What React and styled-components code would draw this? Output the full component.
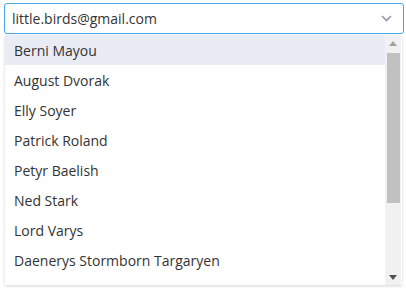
import React from "react";
import styled, { createGlobalStyle } from "styled-components";

const Global = createGlobalStyle`
  html, body { margin: 0; padding: 0; background: #fff; }
  body { font-family: "Open Sans", "Liberation Sans", sans-serif; color: #333; }
`;

const Page = styled.div`
  padding: 3px 3px 0 4px;
  width: 406px;
  height: 288px;
  box-sizing: border-box;
  overflow: hidden;
`;

const Select = styled.div`
  position: relative;
  width: 400px;
`;

const Control = styled.div`
  box-sizing: border-box;
  height: 31px;
  border: 1px solid #45a7ea;
  border-radius: 3px;
  display: flex;
  align-items: center;
  padding: 0 10px 0 7px;
  font-size: 14px;
  color: #333;
`;

const Value = styled.span`
  flex: 1;
`;

const Chevron = styled.svg`
  width: 11px;
  height: 7px;
  margin-right: 1px;
`;

const Menu = styled.div`
  position: absolute;
  top: 32px;
  left: 1px;
  width: 397px;
  height: 250px;
  display: flex;
  background: #fff;
  box-shadow: 0 1px 3px rgba(0, 0, 0, 0.18);
  z-index: 2;
`;

const List = styled.ul`
  flex: 1;
  margin: 0;
  padding: 0;
  list-style: none;
  overflow: hidden;
`;

const Item = styled.li`
  height: 30px;
  display: flex;
  align-items: center;
  padding-left: 9px;
  font-size: 14px;
  color: #333;
  background: ${(p) => (p.$active ? "#e9ecf5" : "transparent")};
`;

const ScrollBar = styled.div`
  width: 16px;
  margin-right: 1px;
  display: flex;
  flex-direction: column;
  background: #f1f1f1;
`;

const ArrowButton = styled.div`
  height: 16px;
  display: flex;
  align-items: center;
  justify-content: center;
`;

const Track = styled.div`
  flex: 1;
  padding: 2px 1px 0 2px;
`;

const Thumb = styled.div`
  height: 150px;
  background: #c1c1c1;
`;

const Behind = styled.p`
  margin: 252px 0 0 1px;
  font-size: 14px;
  line-height: 20px;
  color: #333;
`;

const names = [
  "Berni Mayou",
  "August Dvorak",
  "Elly Soyer",
  "Patrick Roland",
  "Petyr Baelish",
  "Ned Stark",
  "Lord Varys",
  "Daenerys Stormborn Targaryen",
  "Jon Snow",
  "Arya Stark",
  "Tyrion Lannister",
  "Cersei Lannister",
];

export default function App() {
  return (
    <>
      <Global />
      <Page>
        <Select>
          <Control>
            <Value>little.birds@gmail.com</Value>
            <Chevron viewBox="0 0 11 7">
              <polyline points="1,1 5.5,5.5 10,1" fill="none" stroke="#8e97ab" strokeWidth="1.6" />
            </Chevron>
          </Control>
          <Menu>
            <List>
              {names.map((n, i) => (
                <Item key={n} $active={i === 0}>{n}</Item>
              ))}
            </List>
            <ScrollBar>
              <ArrowButton>
                <svg width="8" height="5" viewBox="0 0 8 5"><polygon points="0,5 8,5 4,0" fill="#a3a3a3" /></svg>
              </ArrowButton>
              <Track>
                <Thumb />
              </Track>
              <ArrowButton>
                <svg width="8" height="5" viewBox="0 0 8 5"><polygon points="0,0 8,0 4,5" fill="#505050" /></svg>
              </ArrowButton>
            </ScrollBar>
          </Menu>
        </Select>
        <Behind>Whatever is written below the select field is hidden</Behind>
      </Page>
    </>
  );
}
